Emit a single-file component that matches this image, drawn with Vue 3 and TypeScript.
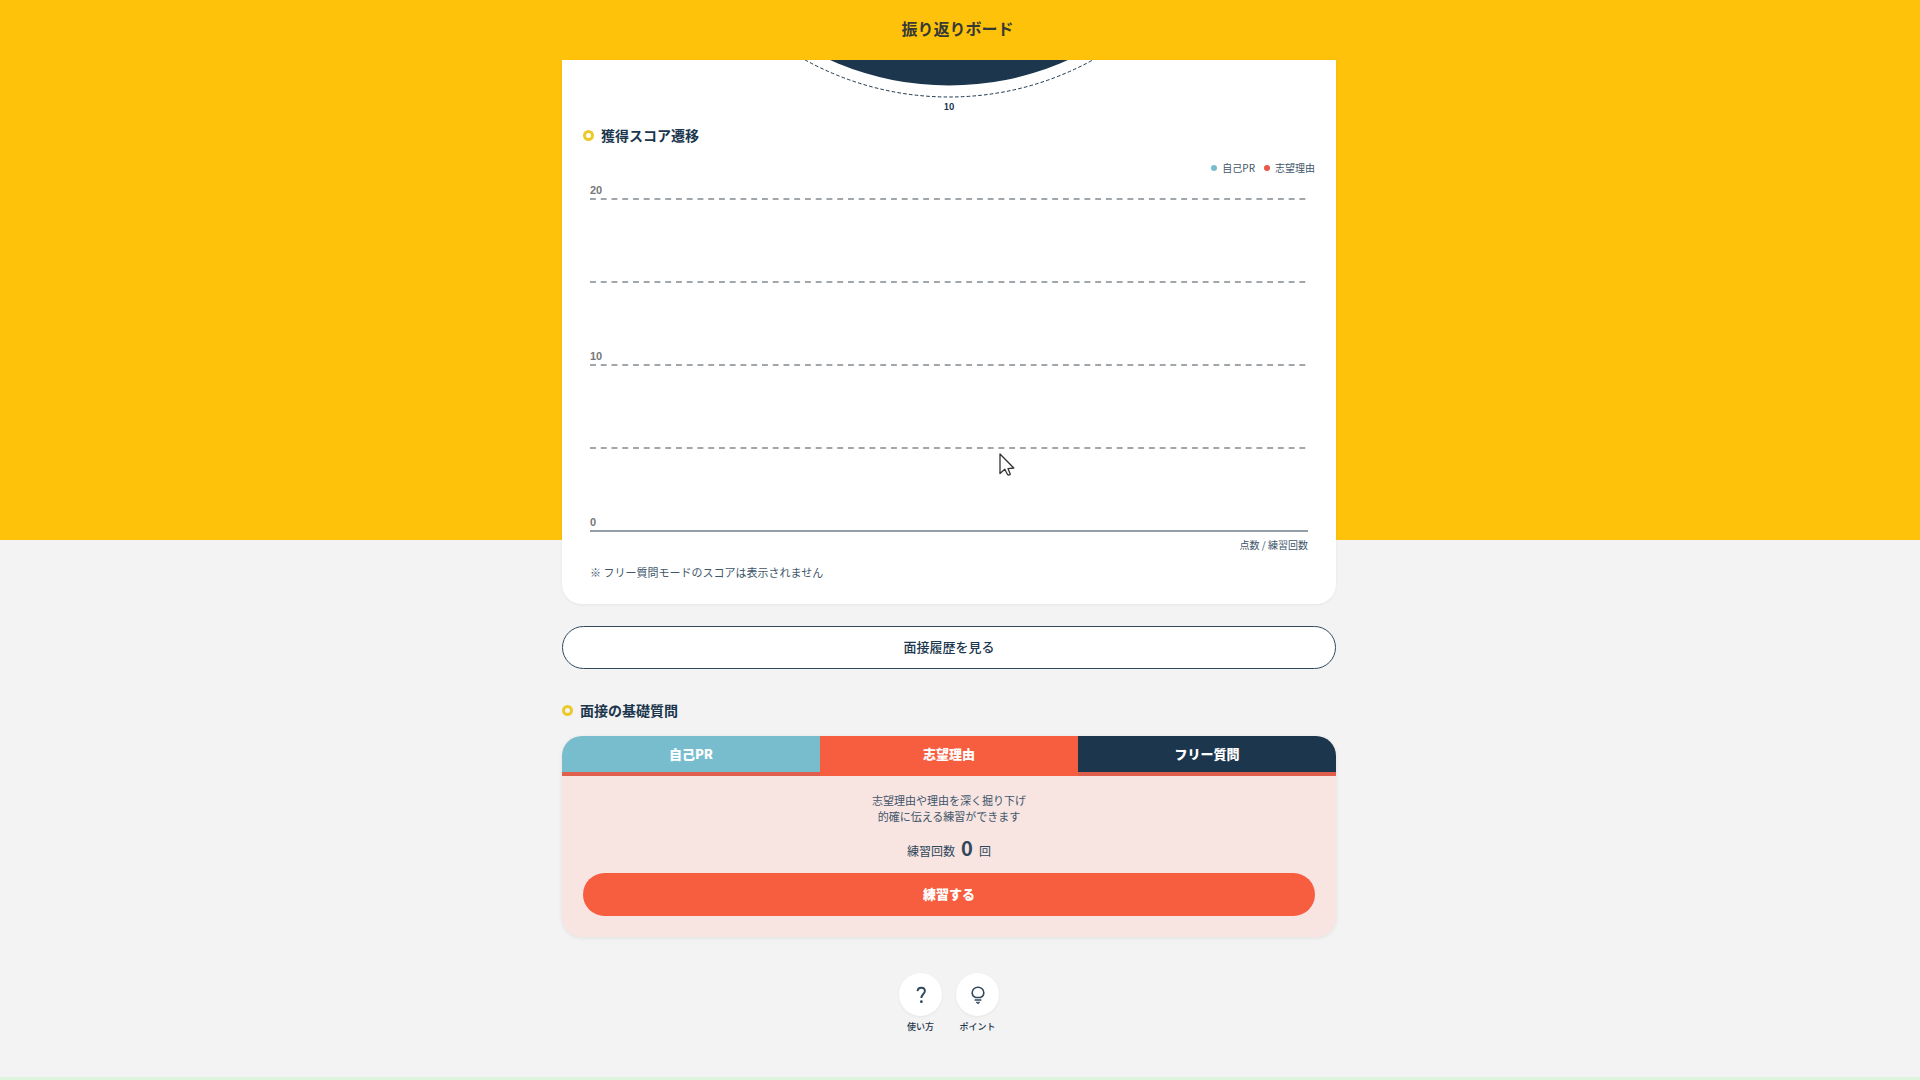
<script setup lang="ts">
interface Tab {
  id: string
  label: string
}

interface Tick {
  value: number
  label: string
}

const ticks: Tick[] = [
  { value: 20, label: '20' },
  { value: 15, label: '' },
  { value: 10, label: '10' },
  { value: 5, label: '' },
  { value: 0, label: '0' },
]

const tabs: Tab[] = [
  { id: 'pr', label: '自己PR' },
  { id: 'reason', label: '志望理由' },
  { id: 'free', label: 'フリー質問' },
]

const activeTab = 'reason'
const practiceCount = 0
</script>

<template>
  <div class="page">
    <header class="header">
      <h1 class="title">振り返りボード</h1>
    </header>

    <main class="main">
      <section class="card">
        <svg class="radar" width="320" height="40" viewBox="0 0 320 40" aria-hidden="true">
          <circle cx="160" cy="-264.5" r="290" fill="#1b364d" />
          <circle cx="160" cy="-261" r="298" fill="none" stroke="#1b364d" stroke-width="1" stroke-dasharray="3.6 2.2" />
        </svg>
        <p class="radar-value">10</p>

        <h2 class="heading"><span class="ring"></span>獲得スコア遷移</h2>

        <ul class="legend">
          <li><span class="dot dot-pr"></span>自己PR</li>
          <li><span class="dot dot-reason"></span>志望理由</li>
        </ul>

        <div class="chart">
          <div v-for="tick in ticks" :key="tick.value" class="tick">
            <span class="tick-label">{{ tick.label }}</span>
            <svg class="rule" height="2" aria-hidden="true">
              <line v-if="tick.value > 0" x1="0" y1="1" x2="100%" y2="1" stroke="#82898f" stroke-width="1.6" pathLength="1336" stroke-dasharray="11 9" />
              <line v-else x1="0" y1="1" x2="100%" y2="1" stroke="#949ea7" stroke-width="2" />
            </svg>
          </div>
          <svg class="cursor" width="16" height="24" viewBox="0 0 16 24" aria-hidden="true">
            <path d="M1 1V20.500L5.800 16.200L8.500 21.500Q9.800 22.600 11.300 21.200L9 15.600L14.800 15Z" fill="#fff" stroke="#333" stroke-width="1.300" stroke-linejoin="round" />
          </svg>
        </div>
        <p class="axis">点数 / 練習回数</p>
        <p class="note">※ フリー質問モードのスコアは表示されません</p>
      </section>

      <button type="button" class="history">面接履歴を見る</button>

      <h2 class="heading questions-heading"><span class="ring"></span>面接の基礎質問</h2>

      <section class="questions">
        <div class="tabs" role="tablist">
          <button
            v-for="tab in tabs"
            :key="tab.id"
            type="button"
            role="tab"
            :aria-selected="tab.id === activeTab"
            :class="['tab', `tab-${tab.id}`]"
          >
            {{ tab.label }}
          </button>
        </div>
        <div class="panel" role="tabpanel">
          <p class="lead">志望理由や理由を深く掘り下げ<br />的確に伝える練習ができます</p>
          <p class="count">
            <span>練習回数</span><strong>{{ practiceCount }}</strong><span>回</span>
          </p>
          <button type="button" class="practice">練習する</button>
        </div>
      </section>

      <nav class="help">
        <a href="#usage" class="help-link">
          <span class="bubble">
            <svg width="16" height="20" viewBox="0 0 16 20" fill="none" aria-hidden="true">
              <path d="M4.500 6.200C4.700 3.900 6.100 2.700 8.200 2.700C10.400 2.700 11.900 4.100 11.900 6.100C11.900 8.900 8.400 9.200 8.400 12.900" stroke="#30485c" stroke-width="1.900" />
              <circle cx="8.400" cy="16.700" r="1.400" fill="#30485c" />
            </svg>
          </span>
          使い方
        </a>
        <a href="#points" class="help-link">
          <span class="bubble">
            <svg width="16" height="20" viewBox="0 0 16 20" fill="none" stroke="#30485c" aria-hidden="true">
              <path d="M5.600 12.500C3.600 11.700 2.200 9.900 2.200 7.700C2.200 4.600 4.800 2.200 8 2.200S13.800 4.600 13.800 7.700C13.800 9.900 12.400 11.700 10.400 12.500Z" stroke-width="1.600" />
              <path d="M4.600 15H11.400" stroke-width="1.500" />
              <path d="M6 17.200H10L8 19Z" fill="#30485c" stroke-width=".6" />
            </svg>
          </span>
          ポイント
        </a>
      </nav>
    </main>
  </div>
</template>

<style>
body {
  margin: 0;
  background: #f3f3f3;
}
</style>

<style scoped>
.page {
  box-sizing: border-box;
  display: flex;
  flex-direction: column;
  min-height: 100vh;
  border-bottom: 3px solid #def5dd;
  background: linear-gradient(#ffc20a, #ffc20a) 0 0 / 100% 50vh no-repeat #f3f3f3;
  color: #1b364d;
  font-family: "Noto Sans CJK JP", "Noto Sans", sans-serif;
}

h1,
h2,
p,
ul {
  margin: 0;
  padding: 0;
}

button {
  font-family: inherit;
  cursor: pointer;
}

.header {
  box-sizing: border-box;
  display: flex;
  align-items: center;
  justify-content: center;
  height: 60px;
  padding: 0 5px 4px 0;
}

.title {
  color: #363a35;
  font-size: 16px;
  font-weight: 700;
  line-height: 24px;
}

.main {
  display: flex;
  flex-direction: column;
  align-items: center;
  padding-right: 22px;
}

.main > * {
  box-sizing: border-box;
  width: 100%;
  max-width: 774px;
}

.card {
  padding: 0 21px 22px;
  border-radius: 0 0 20px 20px;
  background: #fff;
  box-shadow: 0 1px 3px rgba(0, 0, 0, 0.06);
}

.radar {
  display: block;
  margin: 0 auto;
}

.radar-value {
  font-size: 9px;
  font-weight: 700;
  line-height: 14px;
  text-align: center;
}

.heading {
  display: flex;
  align-items: center;
  gap: 7px;
  font-size: 14px;
  font-weight: 700;
  line-height: 20px;
}

.card .heading {
  margin-top: 11px;
}

.ring {
  box-sizing: border-box;
  width: 11px;
  height: 11px;
  border: 3px solid #ebc928;
  border-radius: 50%;
}

.legend {
  display: flex;
  justify-content: flex-end;
  gap: 9px;
  margin-top: 16px;
  color: #40566a;
  font-size: 10px;
  line-height: 14px;
  list-style: none;
}

.legend li {
  display: flex;
  align-items: center;
  gap: 5px;
}

.dot {
  width: 6px;
  height: 6px;
  border-radius: 50%;
}

.dot-pr {
  background: #77bdce;
}

.dot-reason {
  background: #ea5848;
}

.chart {
  position: relative;
  margin: 0 7px;
}

.tick {
  display: flex;
  flex-direction: column;
  justify-content: flex-end;
  height: 83px;
}

.tick:first-child {
  height: 25px;
}

.tick-label {
  color: #777;
  font-family: "Liberation Sans", Arial, sans-serif;
  font-size: 11px;
  font-weight: 700;
  line-height: 16px;
}

.rule {
  display: block;
  width: 100%;
}

.cursor {
  position: absolute;
  top: 278px;
  left: 409px;
}

.axis {
  margin: 5px 7px 0;
  color: #40566a;
  font-size: 10px;
  line-height: 16px;
  text-align: right;
}

.note {
  margin: 10px 7px 0;
  color: #40566a;
  font-size: 11px;
  line-height: 18px;
}

.card .note {
  padding-bottom: 1px;
}

.history {
  height: 43px;
  margin-top: 22px;
  padding: 0 0 2px;
  border: 1px solid #33495d;
  border-radius: 22px;
  background: #fff;
  color: #1b364d;
  font-size: 13px;
  font-weight: 500;
}

.questions-heading {
  margin-top: 31px;
}

.questions {
  margin-top: 16px;
  overflow: hidden;
  border-radius: 20px;
  background: #f8e4e1;
  box-shadow: 0 1px 4px rgba(0, 0, 0, 0.08);
}

.tabs {
  display: flex;
  border-bottom: 4px solid #df5e4c;
}

.tab {
  flex: 1;
  height: 36px;
  padding: 0 0 2px;
  border: 0;
  color: #fff;
  font-size: 13px;
  font-weight: 900;
}

.tab-pr {
  background: #78bdce;
}

.tab-reason {
  height: 40px;
  margin-bottom: -4px;
  padding-bottom: 6px;
  background: #f75e40;
}

.tab-free {
  background: #1b364d;
}

.panel {
  padding: 16px 21px 21px;
  text-align: center;
}

.lead {
  color: #40566a;
  font-size: 11px;
  line-height: 16px;
}

.count {
  display: flex;
  align-items: baseline;
  justify-content: center;
  gap: 6px;
  margin-top: 10px;
  color: #30485c;
  font-size: 12px;
  line-height: 28px;
}

.count strong {
  font-size: 20px;
  font-weight: 700;
}

.practice {
  width: 100%;
  height: 43px;
  margin-top: 8px;
  padding: 0 0 2px;
  border: 0;
  border-radius: 22px;
  background: #f75e40;
  color: #fff;
  font-size: 13px;
  font-weight: 900;
}

.help {
  display: flex;
  justify-content: center;
  gap: 14px;
  margin-top: 36px;
}

.help-link {
  display: flex;
  flex-direction: column;
  align-items: center;
  gap: 4px;
  color: #1b364d;
  font-size: 9px;
  font-weight: 500;
  line-height: 14px;
  text-decoration: none;
}

.bubble {
  display: flex;
  align-items: center;
  justify-content: center;
  width: 43px;
  height: 43px;
  border-radius: 50%;
  background: #fff;
  box-shadow: 0 1px 3px rgba(0, 0, 0, 0.06);
}
</style>
